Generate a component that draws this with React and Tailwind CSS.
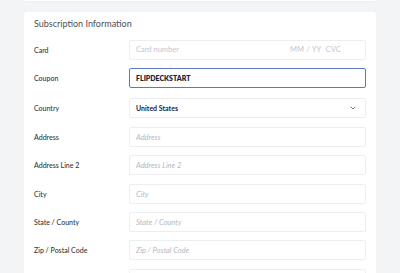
import React from 'react';

const fields = [
  { label: 'Address', placeholder: 'Address', mt: 'mt-[9px]' },
  { label: 'Address Line 2', placeholder: 'Address Line 2', mt: 'mt-[8px]' },
  { label: 'City', placeholder: 'City', mt: 'mt-[9px]' },
  { label: 'State / County', placeholder: 'State / County', mt: 'mt-[8px]' },
  { label: 'Zip / Postal Code', placeholder: 'Zip / Postal Code', mt: 'mt-[8px]' },
  { label: 'Phone', placeholder: 'Phone', mt: 'mt-[9px]' },
];

const Row = ({ label, mt = '', children }) => (
  <div className={`flex items-center h-[20px] ${mt}`}>
    <div className="w-[95px] shrink-0 text-[7px] leading-[10px] font-medium text-[#30343b]">{label}</div>
    <div className="flex-1 h-[20px] flex">{children}</div>
  </div>
);

const inputBase =
  'block w-full h-[20px] m-0 bg-white border border-[#eceef1] rounded-[2px] px-[6px] text-[7.5px] leading-[10px] outline-none';

export default function App() {
  return (
    <div
      className="w-[400px] h-[273px] overflow-hidden bg-[#f3f4f6] px-6"
      style={{ fontFamily: 'Lato, "Noto Sans", sans-serif' }}
    >
      {/* bottom edge of the card above */}
      <div className="h-[2px] bg-white border-b border-[#eceef0] rounded-b-[3px] mr-[1px]" />

      <div className="mt-[10px] bg-white rounded-[3px] px-[10px] pt-[5px] pb-4">
        <h2 className="text-[9px] leading-[14px] text-[#4a4f59] mb-[9px]">Subscription Information</h2>

        <Row label="Card">
          <div className={`${inputBase} flex items-center justify-between pr-[24px]`}>
            <span className="text-[#c2c6cf]">Card number</span>
            <span className="text-[#c2c6cf] tracking-[0.2px]">MM / YY&nbsp;&nbsp;CVC</span>
          </div>
        </Row>
        <Row label="Coupon" mt="mt-[8px]">
          <input
            readOnly
            value="FLIPDECKSTART"
            className="block w-full h-[20px] m-0 bg-white border border-[#5a78c4] rounded-[2px] px-[6px] text-[7px] font-extrabold text-[#1f2433] outline-none"
          />
        </Row>
        <Row label="Country" mt="mt-[10px]">
          <div className={`${inputBase} flex items-center justify-between pr-[9px]`}>
            <span className="text-[7px] font-bold text-[#1f2433]">United States</span>
            <svg width="6" height="4" viewBox="0 0 6 4" fill="none">
              <path d="M0.7 0.8 L3 3 L5.3 0.8" stroke="#6b7280" strokeWidth="1" />
            </svg>
          </div>
        </Row>
        {fields.map((f) => (
          <Row key={f.label} label={f.label} mt={f.mt}>
            <input
              readOnly
              placeholder={f.placeholder}
              className={`${inputBase} italic placeholder:text-[#b4b9c4]`}
            />
          </Row>
        ))}
      </div>
    </div>
  );
}
